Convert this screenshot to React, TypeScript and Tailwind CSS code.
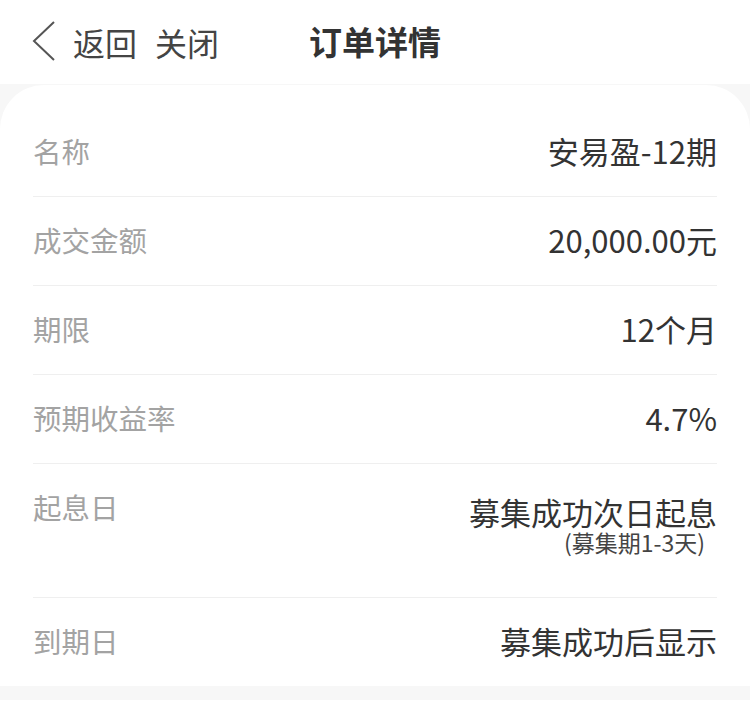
const FONT = { fontFamily: '"Noto Sans CJK SC", "Noto Sans", sans-serif' };

const ROWS = [
  { label: "名称", value: "安易盈-12期" },
  { label: "成交金额", value: "20,000.00元" },
  { label: "期限", value: "12个月" },
  { label: "预期收益率", value: "4.7%" },
];

function Row({ label, value, sub, tall }: { label: string; value: string; sub?: string; tall?: boolean }) {
  return (
    <div className={`flex items-start justify-between border-b border-[#efefef] ${tall ? "h-[134px]" : "h-[89px]"}`}>
      <span className="pt-[23px] text-[28.5px] leading-[40px] text-[#a3a3a3]">{label}</span>
      <div className={`flex flex-col items-end ${tall ? "pt-[31px]" : "pt-[23px]"}`}>
        <span className={`text-[31px] text-[#333] ${tall ? "leading-[34px]" : "leading-[40px]"}`}>{value}</span>
        {sub && <span className="pr-[12px] text-[23px] leading-[26px] text-[#444]">{sub}</span>}
      </div>
    </div>
  );
}

export default function App() {
  return (
    <div className="min-h-[714px] bg-white" style={FONT}>
      <header className="relative flex h-[84px] items-center">
        <div className="flex items-center pl-[30px]">
          <svg width="28" height="42" viewBox="0 0 28 42" fill="none" className="-mt-[2px]">
            <path d="M24 2 L4 21 L24 40" stroke="#555" strokeWidth="2" strokeLinejoin="miter" />
          </svg>
          <span className="ml-[15px] text-[32px] text-[#444]">返回</span>
          <span className="ml-[18px] text-[32px] text-[#444]">关闭</span>
        </div>
        <h1 className="absolute left-1/2 -translate-x-1/2 text-[33px] font-bold text-[#333]">订单详情</h1>
      </header>

      <div className="bg-[#f7f7f7] pt-[1px] pb-[14px]">
        <div className="rounded-t-[44px] bg-white px-[33px] pt-[23px]">
          {ROWS.map((r) => (
            <Row key={r.label} label={r.label} value={r.value} />
          ))}
          <Row label="起息日" value="募集成功次日起息" sub="(募集期1-3天)" tall />
          <div className="flex h-[88px] items-start justify-between">
            <span className="pt-[23px] text-[28.5px] leading-[40px] text-[#a3a3a3]">到期日</span>
            <span className="pt-[23px] text-[31px] leading-[40px] text-[#333]">募集成功后显示</span>
          </div>
        </div>
      </div>
    </div>
  );
}
